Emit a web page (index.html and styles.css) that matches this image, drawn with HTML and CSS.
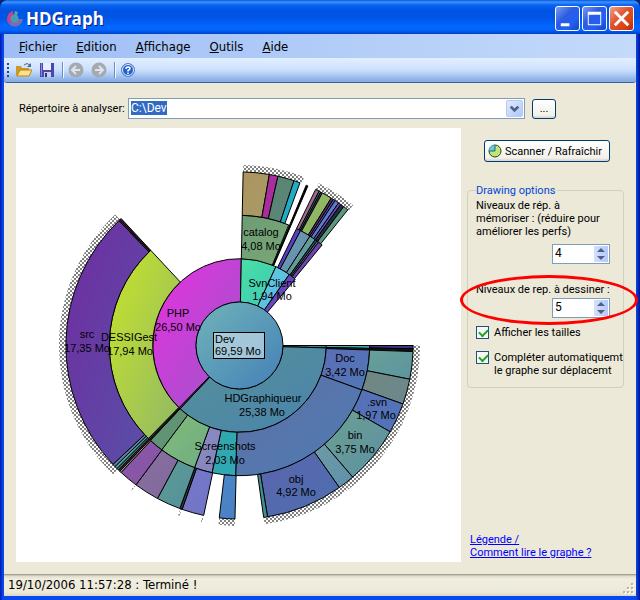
FILE: index.html
```html
<!DOCTYPE html>
<html lang="fr">
<head>
<meta charset="utf-8">
<title>HDGraph</title>
<link rel="stylesheet" href="styles.css">
</head>
<body>
<div class="window">
  <header class="titlebar">
    <svg class="logo" width="18" height="18" viewBox="0 0 18 18" aria-hidden="true">
      <path d="M7 1A8 8 0 0 0 3 14L6 11A4 4 0 0 1 7 5Z" fill="#c8408c"/>
      <path d="M3 14A8 8 0 0 0 16 12L17 9L12 9A4 4 0 0 1 6 11Z" fill="#7a6fa8"/>
      <path d="M9 1L12 2L11 5L8 5Z" fill="#58a898"/>
      <circle cx="8.500" cy="8.500" r="4" fill="#4d9ab8"/>
    </svg>
    <h1>HDGraph</h1>
    <div class="caption-buttons">
      <button class="caption" type="button" aria-label="Réduire"><svg viewBox="0 0 24 24"><path d="M5 17h9v3H5z" fill="#fff"/></svg></button>
      <button class="caption" type="button" aria-label="Agrandir"><svg viewBox="0 0 24 24"><path d="M5 5h14v14H5zM6 8v10h12V8z" fill="#fff" fill-rule="evenodd"/></svg></button>
      <button class="caption caption-close" type="button" aria-label="Fermer"><svg viewBox="0 0 24 24"><path d="M5 5L19 19M19 5L5 19" stroke="#fff" stroke-width="3"/></svg></button>
    </div>
  </header>
  <nav class="menu">
    <a href="#"><u>F</u>ichier</a>
    <a href="#"><u>E</u>dition</a>
    <a href="#"><u>A</u>ffichage</a>
    <a href="#"><u>O</u>utils</a>
    <a href="#"><u>A</u>ide</a>
  </nav>
  <div class="toolbar">
    <span class="grip"></span>
    <button type="button" aria-label="Ouvrir"><svg viewBox="0 0 16 16"><path d="M0 14V4h5l1 2h7v8z" fill="#c99a28"/><path d="M1 14L4 8h12l-3 6z" fill="#ffe08a" stroke="#b88618"/><path d="M8 3q3-3 6 0" fill="none" stroke="#4a6a90"/><path d="M15 1v4h-4z" fill="#4a6a90"/></svg></button>
    <button type="button" aria-label="Enregistrer"><svg viewBox="0 0 16 16"><path d="M1 1h14v14H1z" fill="#4a48b0"/><path d="M4 1h8v7H4z" fill="#e8eefc"/><path d="M2 1h1v13H2z" fill="#8c8ce0"/><path d="M5 10h7v5H5z" fill="#c9cfe4"/><path d="M6 11h2v4H6z" fill="#34347a"/></svg></button>
    <span class="sep"></span>
    <button type="button" aria-label="Précédent"><svg viewBox="0 0 16 16"><circle cx="8" cy="8" r="7.500" fill="#a5a9b0"/><path d="M12 8H5M8 4L4 8l4 4" fill="none" stroke="#dce4ee" stroke-width="2"/></svg></button>
    <button type="button" aria-label="Suivant"><svg viewBox="0 0 16 16"><circle cx="8" cy="8" r="7.500" fill="#a5a9b0"/><path d="M4 8h7M8 4l4 4-4 4" fill="none" stroke="#dce4ee" stroke-width="2"/></svg></button>
    <span class="sep"></span>
    <button type="button" aria-label="Aide"><svg viewBox="0 0 16 16"><circle cx="8" cy="8" r="6.500" fill="#2460d0" stroke="#5a84c8"/><circle cx="8" cy="8" r="5.500" fill="none" stroke="#e6f0ff"/><path d="M6 7q0-2 2-2t2 1.500q0 1-2 2v1M8 10.500v1.500" fill="none" stroke="#fff" stroke-width="1.500"/></svg></button>
  </div>
  <main>
    <div class="path-row">
      <label for="path">Répertoire à analyser:</label>
      <div class="combo">
        <input id="path" type="text" value="C:\Dev">
        <button type="button" aria-label="Dérouler"><svg viewBox="0 0 16 16"><path d="M4 6l4 4 4-4" fill="none" stroke="#4d6185" stroke-width="3"/></svg></button>
      </div>
      <button class="push browse" type="button">...</button>
    </div>
    <div class="content">
      <section class="graph">
        <svg viewBox="16 128 445 434" role="img" aria-label="Graphe">
          <defs>
            <pattern id="dots" width="8" height="4" patternUnits="userSpaceOnUse">
              <path d="M0 0h2v2H0zM4 0h2v2H4zM2 2h2v2H2zM6 2h2v2H6z" fill="#808080" shape-rendering="crispEdges"/>
            </pattern>
            <linearGradient id="core" x1="0" y1="0" x2="1" y2="1"><stop offset="0" stop-color="#70b4b8"/><stop offset="1" stop-color="#4480b8"/></linearGradient>
          </defs>
          <g id="rings"></g>
          <circle class="slice" cx="239.500" cy="345.500" r="43.500" fill="url(#core)"/>
          <rect class="core-box" x="213.500" y="332.500" width="51" height="26"/>
          <g class="labels">
            <text x="261" y="236">catalog</text><text x="261" y="250">4,08 Mo</text>
            <text x="272" y="287">SvnClient</text><text x="272" y="300">1,94 Mo</text>
            <text x="178" y="317">PHP</text><text x="178" y="331">26,50 Mo</text>
            <text x="129" y="341">DESSIGest</text><text x="130" y="355">17,94 Mo</text>
            <text x="87" y="338">src</text><text x="87" y="352">17,35 Mo</text>
            <text x="263" y="402">HDGraphiqueur</text><text x="262" y="416">25,38 Mo</text>
            <text x="345" y="362">Doc</text><text x="345" y="376">3,42 Mo</text>
            <text x="377" y="406">.svn</text><text x="376" y="419">1,97 Mo</text>
            <text x="355" y="439">bin</text><text x="355" y="453">3,75 Mo</text>
            <text x="296" y="483">obj</text><text x="296" y="496">4,92 Mo</text>
            <text x="225" y="450">Screenshots</text><text x="225" y="464">2,03 Mo</text>
            <text class="start" x="215" y="343">Dev</text><text class="start" x="215" y="355">69,59 Mo</text>
          </g>
        </svg>
      </section>
      <aside>
        <button class="push scan" type="button">
          <svg viewBox="0 0 14 14" aria-hidden="true"><circle cx="7" cy="7" r="6" fill="#c4e478" stroke="#1c4a30"/><path d="M7 7V1A6 6 0 0 0 1 7z" fill="#5cc8ec"/><path d="M7 1v6H1" fill="none" stroke="#2a6a60"/></svg>
          Scanner / Rafraîchir
        </button>
        <fieldset>
          <legend>Drawing options</legend>
          <label for="memo">Niveaux de rép. à<br>mémoriser : (réduire pour<br>améliorer les perfs)</label>
          <div class="spin">
            <input id="memo" type="number" value="4">
            <span class="spin-buttons"><button type="button" aria-label="Plus"><svg viewBox="0 0 14 8"><path d="M7 2l4 4H3z"/></svg></button><button type="button" aria-label="Moins"><svg viewBox="0 0 14 8"><path d="M7 6l4-4H3z"/></svg></button></span>
          </div>
          <div class="marked">
            <label for="draw">Niveaux de rep. à dessiner :</label>
            <div class="spin">
              <input id="draw" type="number" value="5">
              <span class="spin-buttons"><button type="button" aria-label="Plus"><svg viewBox="0 0 14 8"><path d="M7 2l4 4H3z"/></svg></button><button type="button" aria-label="Moins"><svg viewBox="0 0 14 8"><path d="M7 6l4-4H3z"/></svg></button></span>
            </div>
            <span class="ring-mark"></span>
          </div>
          <label class="check"><input type="checkbox" checked><span>Afficher les tailles</span></label>
          <label class="check"><input type="checkbox" checked><span>Compléter automatiquemt<br>le graphe sur déplacemt</span></label>
        </fieldset>
        <a class="legend-link" href="#">Légende /<br>Comment lire le graphe ?</a>
      </aside>
    </div>
  </main>
  <footer>
    <span>19/10/2006 11:57:28 : Terminé !</span>
    <svg class="sizer" viewBox="0 0 12 12" aria-hidden="true"><path d="M9 1h2v2H9zM5 5h2v2H5zM9 5h2v2H9zM1 9h2v2H1zM5 9h2v2H5zM9 9h2v2H9z" fill="#fff"/><path d="M8 0h2v2H8zM4 4h2v2H4zM8 4h2v2H8zM0 8h2v2H0zM4 8h2v2H4zM8 8h2v2H8z" fill="#b8b4a0"/></svg>
  </footer>
</div>
<script src="graph.js"></script>
</body>
</html>
```
FILE: graph.js
```js
// Slices: [level, start angle, end angle, first colour, last colour].
// Angles are in degrees, clockwise from three o'clock.
const slices = [
  [1, 0, 1.6, '#2f9090', '#2f8080'],
  [1, 1.6, 133.2, '#569098', '#4a84ac'],
  [1, 133.2, 134.2, '#5a3080', '#5a3080'],
  [1, 134.2, 271.2, '#e830e0', '#9858c8'],
  [1, 271.2, 294.8, '#48e0a4', '#40c8b8'],
  [1, 294.8, 305, '#60cce0', '#58b8e0'],
  [1, 305, 310, '#5848c0', '#7048b8'],
  [2, 0, 1.3, '#40b0a0', '#40a0a0'],
  [2, 1.3, 2, '#204040', '#204040'],
  [2, 2, 20, '#5c6cb8', '#5078b4'],
  [2, 20, 91.7, '#6070a4', '#4c7cb4'],
  [2, 91.7, 102.2, '#30a8a8', '#30a8b8'],
  [2, 102.2, 110.2, '#8c8cc4', '#8484bc'],
  [2, 110.2, 126.7, '#80bc78', '#70ac84'],
  [2, 126.7, 133.2, '#609474', '#609474'],
  [2, 133.2, 133.7, '#303830', '#303830'],
  [2, 133.7, 134.4, '#303830', '#303830'],
  [2, 134.4, 227, '#c8e428', '#90b868'],
  [2, 271.2, 292.2, '#6c9c74', '#7ca878'],
  [2, 292.6, 293.2, '#000', '#000'],
  [2, 296, 298, '#5a40c8', '#5040b8'],
  [2, 298, 302.8, '#7098a8', '#6090b8'],
  [2, 302.8, 305.6, '#60a098', '#60989c'],
  [2, 305.6, 306.6, '#305050', '#305050'],
  [2, 306.6, 307.4, '#6870a8', '#6870a8'],
  [2, 307.4, 309.4, '#6040a8', '#7848b0'],
  [3, 0, 1.1, '#403088', '#403088'],
  [3, 1.1, 2, '#101818', '#101818'],
  [3, 2, 11.2, '#68a098', '#5c94a0'],
  [3, 11.2, 19.7, '#708880', '#6c8890'],
  [3, 19.7, 29.8, '#5870b8', '#5074b8'],
  [3, 29.8, 49.3, '#6ca090', '#5c90a4'],
  [3, 49.3, 54.9, '#6c9ca4', '#6090ac'],
  [3, 54.9, 80.7, '#5c64ac', '#4c70b0'],
  [3, 80.7, 82, '#409090', '#409090'],
  [3, 91.5, 96.7, '#4c88c8', '#4880c4'],
  [3, 101.9, 109.3, '#7878cc', '#7074c4'],
  [3, 109.3, 110.1, '#303840', '#303840'],
  [3, 110.1, 118.2, '#5c9c94', '#54909c'],
  [3, 118.2, 126.6, '#8870a0', '#80689c'],
  [3, 126.6, 133, '#9054a8', '#8058a4'],
  [3, 133, 133.6, '#a09c98', '#a09c98'],
  [3, 133.6, 134.2, '#303030', '#303030'],
  [3, 134.2, 134.9, '#706068', '#706068'],
  [3, 134.9, 135.8, '#30b0a8', '#30b0a8'],
  [3, 135.8, 136.8, '#6878a0', '#6878a0'],
  [3, 136.8, 226, '#702ca0', '#5850a8'],
  [3, 226, 226.5, '#502838', '#502838'],
  [3, 226.5, 227, '#402830', '#402830'],
  [3, 271.2, 279.9, '#ac945c', '#a89c68'],
  [3, 279.9, 282.8, '#a82ca0', '#a83098'],
  [3, 282.8, 288.3, '#5c8470', '#58887c'],
  [3, 288.3, 290.4, '#20b0c8', '#20a8c0'],
  [3, 292.6, 293.2, '#000', '#000'],
  [3, 296, 297.3, '#a06c8c', '#a06c8c'],
  [3, 297.3, 297.9, '#308080', '#308080'],
  [3, 297.9, 298.5, '#503070', '#503070'],
  [3, 298.5, 301.9, '#90bc5c', '#90b068'],
  [3, 301.9, 302.7, '#503070', '#503070'],
  [3, 302.7, 303.4, '#6848a8', '#6848a8'],
  [3, 303.4, 304.8, '#5c80d0', '#5878c8'],
  [3, 304.8, 305.7, '#6848b0', '#6848b0'],
  [3, 305.7, 306.9, '#203040', '#203040'],
  [3, 306.9, 308.6, '#60a080', '#589078']
];

// Arcs where deeper folders exist but are not drawn.
const hidden = [[0, 82], [91.5, 96.7], [109.4, 109.9], [101.9, 102.3], [126.6, 127], [134.5, 226.5], [271.2, 291], [296, 309]];

const SVG = 'http://www.w3.org/2000/svg';
const cx = 239.5, cy = 345.5, band = 43.4;
const rings = document.getElementById('rings');

function point(r, deg) {
  const a = deg * Math.PI / 180;
  return (cx + r * Math.cos(a)).toFixed(2) + ' ' + (cy + r * Math.sin(a)).toFixed(2);
}

function sector(r0, r1, a0, a1) {
  const large = a1 - a0 > 180 ? 1 : 0;
  return `M${point(r0, a0)}L${point(r1, a0)}A${r1} ${r1} 0 ${large} 1 ${point(r1, a1)}` +
    `L${point(r0, a1)}A${r0} ${r0} 0 ${large} 0 ${point(r0, a0)}Z`;
}

function add(parent, tag, attributes) {
  const node = document.createElementNS(SVG, tag);
  for (const name in attributes) node.setAttribute(name, attributes[name]);
  parent.appendChild(node);
  return node;
}

for (const [a0, a1] of hidden) {
  add(rings, 'path', { d: sector(band * 4, band * 4 + 7, a0, a1), fill: 'url(#dots)' });
}

slices.forEach(([level, a0, a1, from, to], i) => {
  const gradient = add(rings, 'linearGradient', { id: 'g' + i, x1: 0, y1: 0, x2: 1, y2: 1 });
  add(gradient, 'stop', { offset: 0, 'stop-color': from });
  add(gradient, 'stop', { offset: 1, 'stop-color': to });
  add(rings, 'path', {
    class: 'slice',
    d: sector(band * level, band * (level + 1), a0, a1),
    fill: `url(#g${i})`
  });
});
```
FILE: styles.css
```css
* { box-sizing: border-box; }

body {
  margin: 0;
  font: 11px/13px Roboto, "Liberation Sans", Arial, sans-serif;
  color: #000;
  background: #0a246a;
}

button, input { font: inherit; color: inherit; margin: 0; padding: 0; }
button svg { display: block; }

.window {
  display: flex;
  flex-direction: column;
  min-height: 100vh;
  padding: 0 4px 4px;
  border-radius: 8px 8px 0 0;
  background:
    linear-gradient(#ece9d8, #ece9d8) content-box,
    linear-gradient(90deg, #0019a8, #0848f0 3px, #0848f0 calc(100% - 4px), #00138c);
  overflow: hidden;
}

.titlebar {
  display: flex;
  align-items: center;
  height: 34px;
  margin: 0 -4px;
  padding: 3px 6px 0;
  background: linear-gradient(#0855d8 0, #3c93ff 2px, #0a64f0 5px, #0054e3 10px, #0055e6 18px, #0266ff 26px, #0264fc 30px, #0040c8 34px);
}
.titlebar h1 {
  flex: 1;
  margin: 0 0 0 2px;
  font: bold 17px/24px "Open Sans", sans-serif;
  color: #fff;
  text-shadow: 1px 1px #0a1883;
}
.caption-buttons { display: flex; gap: 2px; }
.caption {
  width: 25px;
  height: 25px;
  border: 1px solid #fff;
  border-radius: 3px;
  background: linear-gradient(135deg, #7a9cf0, #2c5ce4 40%, #2260f4 70%, #1846c0);
}
.caption-close { background: linear-gradient(135deg, #f0a088, #e0502c 45%, #d84414 75%, #b02c08); }

.menu {
  display: flex;
  align-items: center;
  gap: 19px;
  height: 24px;
  padding: 2px 15px 0;
  background: linear-gradient(90deg, #9ebef5, #c4dafa);
}
.menu a {
  font: 13px/16px "DejaVu Sans Condensed", "DejaVu Sans", sans-serif;
  color: #000;
  text-decoration: none;
}

.toolbar {
  display: flex;
  align-items: center;
  gap: 7px;
  height: 25px;
  padding: 0 3px;
  background: linear-gradient(#e3efff, #cbe0fc 50%, #88aee4 95%);
  border-bottom: 1px solid #3b619c;
  border-radius: 0 0 3px 3px;
}
.toolbar button { width: 16px; height: 16px; border: 0; background: none; }
.grip {
  width: 2px;
  height: 14px;
  background: repeating-linear-gradient(#27418e 0 2px, transparent 2px 4px);
}
.sep { width: 2px; height: 16px; margin-right: -3px; border-left: 1px solid #6a8ccb; border-right: 1px solid #f1f9ff; }

main { display: flex; flex-direction: column; flex: 1; padding: 15px 0 12px 12px; }

.path-row { display: flex; align-items: center; padding: 0 80px 0 3px; }
.path-row label { width: 109px; white-space: nowrap; }
.combo {
  display: flex;
  flex: 1;
  height: 21px;
  padding: 1px;
  border: 1px solid #7f9db9;
  background: #fff;
}
.combo input {
  flex: 1;
  min-width: 0;
  padding: 0 1px;
  border: 0;
  font-size: 12px;
  color: #fff;
  background: linear-gradient(#316ac5, #316ac5) 1px 1px / 36px 14px no-repeat;
}
.combo button {
  width: 17px;
  border: 1px solid #b8c8f4;
  border-radius: 2px;
  background: linear-gradient(135deg, #e1eafe, #aec8f7);
}
.push {
  border: 1px solid #003c74;
  border-radius: 3px;
  background: linear-gradient(#fff, #f2f1ea 85%, #d8d0c4);
}
.browse { width: 24px; height: 20px; margin-left: 7px; }

.content { display: flex; flex: 1; margin-top: 9px; }
.graph { flex: 1; min-width: 0; background: #fff; }
.graph svg { display: block; width: 100%; }
.slice { stroke: #000; stroke-width: 1; }
.core-box { fill: #fff; fill-opacity: .45; stroke: #000; }
.labels { font-family: "Liberation Sans", Arial, sans-serif; font-size: 11px; text-anchor: middle; }
.labels .start { text-anchor: start; }

aside {
  display: flex;
  flex-direction: column;
  width: 175px;
  padding: 12px 12px 3px 6px;
}
.scan {
  display: flex;
  align-items: center;
  align-self: flex-end;
  gap: 3px;
  height: 22px;
  min-width: 126px;
  margin-right: 14px;
  padding: 0 5px 0 3px;
  white-space: nowrap;
}
.scan svg { width: 14px; height: 14px; }

fieldset {
  margin: 22px 0 0;
  padding: 2px 5px 10px 8px;
  border: 1px solid #d0d0bf;
  border-radius: 4px;
  min-width: 0;
}
legend { padding: 0 2px 0 0; color: #0046d5; }
fieldset label { display: block; }
.spin {
  display: flex;
  width: 58px;
  height: 20px;
  margin: 6px 8px 0 auto;
  padding: 1px;
  border: 1px solid #7f9db9;
  background: #fff;
}
.spin input {
  flex: 1;
  min-width: 0;
  padding: 0 1px 2px;
  border: 0;
  font-size: 12px;
  background: none;
  appearance: textfield;
}
.spin input::-webkit-inner-spin-button { appearance: none; }
.spin-buttons { display: flex; flex-direction: column; width: 14px; }
.spin-buttons button {
  flex: 1;
  min-height: 0;
  border: 0;
  background: linear-gradient(90deg, #d4e0fc, #b4caf8);
}
.spin-buttons path { fill: #4d6185; }
.marked { position: relative; margin-top: 19px; }
.marked .spin { margin-top: 2px; }
.ring-mark {
  position: absolute;
  inset: -8px -20px -7px -16px;
  border: 3px solid #f00;
  border-radius: 50%;
  pointer-events: none;
}
fieldset .check { display: flex; gap: 5px; margin-top: 8px; white-space: nowrap; }
fieldset .check + .check { margin-top: 12px; }
.check input {
  flex: none;
  width: 13px;
  height: 13px;
  appearance: none;
  border: 1px solid #1c5180;
  background: #f6f6f2;
}
.check input:checked::before {
  content: "";
  display: block;
  width: 7px;
  height: 4px;
  margin: 2px;
  border: solid #21a121;
  border-width: 0 0 2px 2px;
  transform: rotate(-45deg);
}
.legend-link { margin-top: auto; padding-left: 3px; color: #00f; white-space: nowrap; }

footer {
  display: flex;
  align-items: center;
  justify-content: space-between;
  height: 22px;
  padding: 0 1px 0 4px;
  font: 13px/16px "DejaVu Sans Condensed", "DejaVu Sans", sans-serif;
  background: linear-gradient(#908c7c 0, #e0dccb 2px, #f0eee0 5px, #ece9d8 18px, #dcd8c4);
}
.sizer { width: 12px; height: 12px; align-self: flex-end; margin-bottom: 1px; }
```
